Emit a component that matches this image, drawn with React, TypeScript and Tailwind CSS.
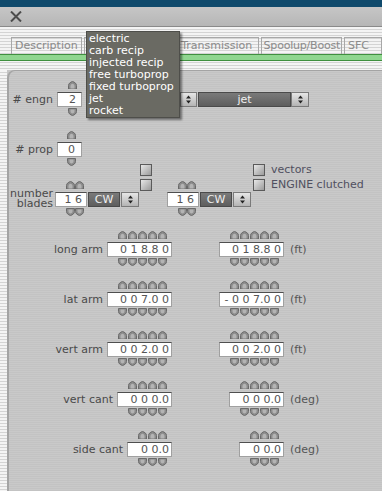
import React from "react";

function UpArrow() {
  return (
    <svg width="9" height="8" viewBox="0 0 9 8">
      <path d="M0.5 8 V4.5 C0.5 2.5 2.5 1 4.5 0.5 C6.5 1 8.5 2.5 8.5 4.5 V8 Z" fill="#8c8c8c" stroke="#6a6a6a" strokeWidth="1" />
      <path d="M2.5 7.5 V5 C2.5 3.8 3.5 3 4.5 2.7 C5.5 3 6.5 3.8 6.5 5 V7.5 Z" fill="#b4b4b4" />
    </svg>
  );
}

function DownArrow() {
  return (
    <svg width="9" height="8" viewBox="0 0 9 8">
      <path d="M0.5 0.5 H8.5 V3.5 C8.5 5.5 6.5 7 4.5 7.5 C2.5 7 0.5 5.5 0.5 3.5 Z" fill="#8c8c8c" stroke="#6a6a6a" strokeWidth="1" />
      <path d="M2.5 1.5 H6.5 V3.5 C6.5 4.6 5.6 5.3 4.5 5.6 C3.4 5.3 2.5 4.6 2.5 3.5 Z" fill="#b4b4b4" />
    </svg>
  );
}

function UpDownIcon() {
  return (
    <svg width="7" height="9" viewBox="0 0 7 9">
      <path d="M3.5 0.5 L6 3.5 H1 Z" fill="#222" />
      <path d="M1 5.5 H6 L3.5 8.5 Z" fill="#222" />
    </svg>
  );
}

function Spinner({
  value,
  n,
  w,
  apr,
  tpr,
  cell,
}: {
  value: string;
  n: number;
  w: string;
  apr: string;
  tpr: string;
  cell: string;
}) {
  const arr = Array.from({ length: n }, (_, i) => i);
  return (
    <div className={`flex flex-col shrink-0 ${w}`}>
      <div className={`flex justify-end items-start h-[11px] ${apr}`}>
        {arr.map((i) => (
          <div key={i} className={`flex justify-center ${cell}`}>
            <UpArrow />
          </div>
        ))}
      </div>
      <div
        className={`h-[15px] bg-white border border-[#a0a0a0] border-t-[#4e4e4e] text-right leading-[13px] text-[#555] whitespace-pre ${tpr}`}
      >
        {value}
      </div>
      <div className={`flex justify-end items-start h-[9px] pt-[1px] ${apr}`}>
        {arr.map((i) => (
          <div key={i} className={`flex justify-center ${cell}`}>
            <DownArrow />
          </div>
        ))}
      </div>
    </div>
  );
}

function Dropdown({ text, bw, btn }: { text: string; bw: string; btn: string }) {
  return (
    <div className="flex h-[15px] mt-[11px] shrink-0">
      <div
        className={`${bw} h-[15px] bg-[linear-gradient(to_bottom,#7a7a7a,#5e5e5e)] border border-[#4a4a4a] text-[#f0f0f0] text-center leading-[13px]`}
      >
        {text}
      </div>
      <div
        className={`${btn} h-[15px] bg-[linear-gradient(to_bottom,#e6e6e6,#b4b4b4)] border border-[#7a7a7a] flex items-center justify-center`}
      >
        <UpDownIcon />
      </div>
    </div>
  );
}

function Check() {
  return (
    <div className="w-[12px] h-[12px] border border-[#5a5a5a] bg-[linear-gradient(135deg,#e8e8e8,#9a9a9a)] shrink-0" />
  );
}

function ArmRow({
  label,
  n,
  lv,
  rv,
  unit,
  w,
  tpr,
}: {
  label: string;
  n: number;
  lv: string;
  rv: string;
  unit: string;
  w: string;
  tpr: string;
}) {
  return (
    <div className="flex items-start h-[50px]">
      <div className="w-[163px] flex justify-end items-start gap-[4px]">
        <div className="mt-[11px] h-[15px] leading-[15px] text-[#4a4a4a] whitespace-nowrap">{label}</div>
        <Spinner value={lv} n={n} w={w} apr="pr-[5px]" tpr={tpr} cell="w-[10px]" />
      </div>
      <div className="w-[112px] flex justify-end items-start">
        <Spinner value={rv} n={n} w={w} apr="pr-[5px]" tpr={tpr} cell="w-[10px]" />
      </div>
      <div className="ml-[6px] mt-[11px] h-[15px] leading-[15px] text-[#555]">{unit}</div>
    </div>
  );
}

export default function App() {
  const stripes =
    "bg-[repeating-linear-gradient(to_bottom,#f4f4f4_0px,#f4f4f4_2px,#d4d4d4_2px,#d4d4d4_3px)]";
  return (
    <div className="relative w-[382px] h-[491px] overflow-hidden font-['DejaVu_Sans',sans-serif] text-[11px] bg-[#c6c6c6]">
      {/* top blue bar */}
      <div className="h-[7px] bg-[#0f4a6c]" />
      {/* title bar */}
      <div className="h-[20px] bg-[linear-gradient(to_bottom,#c6c6c6,#b6b6b6)] border-b border-[#8a8a8a] flex items-center pl-[10px]">
        <svg width="12" height="11" viewBox="0 0 12 11">
          <path d="M1 0.5 L11 10.5 M11 0.5 L1 10.5" stroke="#4c4c4c" strokeWidth="2" />
        </svg>
      </div>
      {/* tab area */}
      <div className={`h-[43px] ${stripes} flex flex-col`}>
        <div className="flex mt-[10px] h-[17px] text-[#8a8a8a]">
          <div className="ml-[11px] w-[75px] h-[17px] border border-b-0 border-[#a8a8a8] pl-[3px] leading-[16px] overflow-hidden whitespace-nowrap">
            Description
          </div>
          <div className="ml-[2px] w-[90px] h-[17px] border border-b-0 border-[#a8a8a8]" />
          <div className="ml-[8px] w-[86px] h-[17px] border border-b-0 border-[#a8a8a8] pl-[3px] leading-[16px] overflow-hidden whitespace-nowrap">
            Transmission
          </div>
          <div className="ml-[2px] w-[86px] h-[17px] border border-b-0 border-[#a8a8a8] pl-[2px] leading-[16px] overflow-hidden whitespace-nowrap tracking-[-0.2px]">
            Spoolup/Boost
          </div>
          <div className="ml-[2px] w-[40px] h-[17px] border border-b-0 border-[#a8a8a8] pl-[3px] leading-[16px] overflow-hidden whitespace-nowrap">
            SFC
          </div>
        </div>
        <div className="h-[7px] bg-[#8fd68f] border-y border-[#3f8f3f]" />
      </div>
      {/* body */}
      <div className="flex h-[421px]">
        <div className={`w-[7px] ${stripes}`} />
        <div className="flex-1 border-l-2 border-t border-[#a4a4a4] rounded-tl-[8px] bg-[repeating-linear-gradient(to_bottom,#c9c9c9_0px,#c9c9c9_1px,#c3c3c3_1px,#c3c3c3_2px)] pt-[10px] text-[#4a4a4a]">
          {/* engn row */}
          <div className="flex items-start h-[50px]">
            <div className="w-[44px] mt-[11px] h-[15px] leading-[15px] text-right whitespace-nowrap">
              # engn
            </div>
            <div className="ml-[4px]">
              <Spinner value="2" n={1} w="w-[25px]" apr="pr-[5px]" tpr="pr-[5px]" cell="w-[10px]" />
            </div>
            <div className="ml-[4px]">
              <Dropdown text="" bw="w-[94px]" btn="w-[17px]" />
            </div>
            <div className="ml-[1px]">
              <Dropdown text="jet" bw="w-[93px]" btn="w-[18px]" />
            </div>
          </div>
          {/* prop row */}
          <div className="flex items-start h-[50px]">
            <div className="w-[44px] mt-[11px] h-[15px] leading-[15px] text-right whitespace-nowrap">
              # prop
            </div>
            <div className="ml-[4px]">
              <Spinner value="0" n={1} w="w-[25px]" apr="pr-[6px]" tpr="pr-[6px]" cell="w-[10px]" />
            </div>
          </div>
          {/* blades row */}
          <div className="flex items-start h-[50px]">
            <div className="w-[44px] mt-[8px] h-[20px] text-right whitespace-nowrap">
              <div className="h-[10px] leading-[10px]">number</div>
              <div className="h-[10px] leading-[10px]">blades</div>
            </div>
            <div className="ml-[2px]">
              <Spinner value="1 6" n={2} w="w-[32px]" apr="pr-[3px]" tpr="pr-[4px]" cell="w-[9px]" />
            </div>
            <div className="ml-[1px] flex h-[15px] mt-[11px]">
              <div className="w-[32px] h-[15px] bg-[linear-gradient(to_bottom,#7a7a7a,#5e5e5e)] border border-[#4a4a4a] text-[#f0f0f0] text-center leading-[13px]">
                CW
              </div>
              <div className="ml-[1px] w-[18px] h-[15px] bg-[linear-gradient(to_bottom,#e6e6e6,#b4b4b4)] border border-[#7a7a7a] flex items-center justify-center">
                <UpDownIcon />
              </div>
            </div>
            <div className="ml-[1px] -mt-[17px] flex flex-col gap-[3px]">
              <Check />
              <Check />
            </div>
            <div className="ml-[15px]">
              <Spinner value="1 6" n={2} w="w-[32px]" apr="pr-[3px]" tpr="pr-[4px]" cell="w-[9px]" />
            </div>
            <div className="ml-[1px] flex h-[15px] mt-[11px]">
              <div className="w-[32px] h-[15px] bg-[linear-gradient(to_bottom,#7a7a7a,#5e5e5e)] border border-[#4a4a4a] text-[#f0f0f0] text-center leading-[13px]">
                CW
              </div>
              <div className="ml-[1px] w-[18px] h-[15px] bg-[linear-gradient(to_bottom,#e6e6e6,#b4b4b4)] border border-[#7a7a7a] flex items-center justify-center">
                <UpDownIcon />
              </div>
            </div>
            <div className="ml-[2px] -mt-[17px] flex flex-col gap-[3px]">
              <div className="flex items-center gap-[6px] h-[12px]">
                <Check />
                <span className="text-[#505060]">vectors</span>
              </div>
              <div className="flex items-center gap-[6px] h-[12px]">
                <Check />
                <span className="text-[#505060] whitespace-nowrap">ENGINE clutched</span>
              </div>
            </div>
          </div>
          <ArmRow label="long arm" n={5} lv="0 1 8.8 0" rv="0 1 8.8 0" unit="(ft)" w="w-[65px]" tpr="pr-[2px]" />
          <ArmRow label="lat arm" n={5} lv="0 0 7.0 0" rv="- 0 0 7.0 0" unit="(ft)" w="w-[65px]" tpr="pr-[2px]" />
          <ArmRow label="vert arm" n={5} lv="0 0 2.0 0" rv="0 0 2.0 0" unit="(ft)" w="w-[65px]" tpr="pr-[2px]" />
          <ArmRow label="vert cant" n={4} lv="0 0 0.0" rv="0 0 0.0" unit="(deg)" w="w-[55px]" tpr="pr-[2px]" />
          <ArmRow label="side cant" n={3} lv="0 0.0" rv="0 0.0" unit="(deg)" w="w-[45px]" tpr="pr-[2px]" />
        </div>
      </div>
      {/* popup menu */}
      <div className="absolute left-[86px] top-[31px] w-[94px] h-[87px] bg-[#6a6a63] border border-[#4e4e4a] shadow-[2px_2px_2px_rgba(0,0,0,0.45)] text-white leading-[12px] pl-[2px] pt-[1px] whitespace-nowrap">
        <div>electric</div>
        <div>carb recip</div>
        <div>injected recip</div>
        <div>free turboprop</div>
        <div>fixed turboprop</div>
        <div>jet</div>
        <div>rocket</div>
      </div>
    </div>
  );
}
